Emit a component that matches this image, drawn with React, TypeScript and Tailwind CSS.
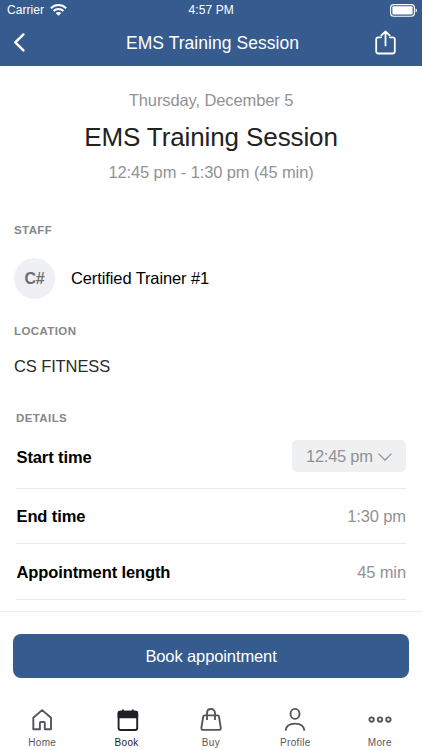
import type { ReactNode } from "react";

function StatusBar() {
  return (
    <div className="grid h-5 grid-cols-[1fr_45px_1fr] items-center text-[12px]">
      <div className="flex items-center gap-[6px] pl-[7px]">
        <span className="tracking-[0.05px]">Carrier</span>
        <svg width="17" height="12" viewBox="0 0 17 12" fill="none" stroke="currentColor" strokeWidth="2">
          <path d="M0.9 4.2C5.2 0 11.8 0 16.1 4.2" />
          <path d="M3.6 7C6.4 4.3 10.6 4.3 13.4 7" />
          <path d="M8.5 11.8L5.7 9C7.3 7.5 9.7 7.5 11.3 9Z" fill="currentColor" stroke="none" />
        </svg>
      </div>
      <span className="whitespace-nowrap tracking-[0.1px]">4:57 PM</span>
      <svg className="mr-[4px] justify-self-end" width="28" height="13" viewBox="0 0 28 13" fill="none">
        <rect x="0.6" y="0.6" width="23.8" height="11.6" rx="3" stroke="currentColor" strokeWidth="1.1" />
        <rect x="2.4" y="2.3" width="20.2" height="8.2" rx="1" fill="currentColor" />
        <path d="M25.6 4.4C27.5 5 27.5 7.8 25.6 8.4Z" fill="currentColor" />
      </svg>
    </div>
  );
}

function Header() {
  return (
    <header className="bg-[#365c8f] text-white">
      <StatusBar />
      <div className="flex h-[46px] items-center justify-between pl-[13px] pr-[25px]">
        <svg width="37" height="20" viewBox="0 0 37 20" fill="none" stroke="currentColor" strokeWidth="2.4" strokeLinecap="round" strokeLinejoin="round">
          <path d="M10.4 1.4L2.3 9.4L10.4 17.4" />
        </svg>
        <h1 className="text-[17.5px] tracking-[0.04px]">EMS Training Session</h1>
        <svg width="22" height="26" viewBox="0 0 22 26" fill="none" stroke="currentColor" strokeWidth="1.8" strokeLinecap="round" strokeLinejoin="round">
          <path d="M6.2 7.3H3.4C2 7.3 1.2 8.1 1.2 9.5V21.3C1.2 22.7 2 23.5 3.4 23.5H17.6C19 23.5 19.8 22.7 19.8 21.3V9.5C19.8 8.1 19 7.3 17.6 7.3H14.8" />
          <path d="M10.5 15.4V1.9M6.4 5.4L10.5 1.5L14.6 5.4" />
        </svg>
      </div>
    </header>
  );
}

function SectionLabel({ children }: { children: ReactNode }) {
  return <h3 className="text-[11.5px] leading-4 font-bold tracking-[0.4px] text-[#86878a]">{children}</h3>;
}

function DetailRow({ label, className = "h-[55.5px] pt-[2px]", children }: { label: string; className?: string; children: ReactNode }) {
  return (
    <div className={`flex items-center justify-between border-b border-[#ebebec] ${className}`}>
      <span className="pl-[0.5px] font-bold text-black">{label}</span>
      <span className="text-[#929294]">{children}</span>
    </div>
  );
}

const tabs = [
  {
    label: "Home",
    icon: (
      <path d="M2.3 9.8L11.1 2.1L20 9.8V21.3H13.8V14.9C13.8 14.3 13.5 14 12.9 14H9.8C9.2 14 8.9 14.3 8.9 14.9V21.3H2.3Z" />
    ),
  },
  {
    label: "Book",
    active: true,
    icon: (
      <>
        <rect x="2.6" y="3.8" width="18.6" height="18.2" rx="2" />
        <path d="M3.6 3.8H20.2Q21.2 3.8 21.2 4.8V9.2H2.6V4.8Q2.6 3.8 3.6 3.8Z" fill="currentColor" />
        <path d="M7 1.6V4M16.8 1.6V4" />
      </>
    ),
  },
  {
    label: "Buy",
    icon: (
      <>
        <path d="M4.6 7.4H17.6Q18.8 7.4 19 8.6L20.8 19.8Q21 21.9 18.9 21.9H3.3Q1.2 21.9 1.4 19.8L3.2 8.6Q3.4 7.4 4.6 7.4Z" />
        <path d="M7 12V5.2C7 2.5 8.6 1 11 1S15 2.5 15 5.2V12" />
      </>
    ),
  },
  {
    label: "Profile",
    icon: (
      <>
        <ellipse cx="11" cy="5.9" rx="4.5" ry="5" />
        <path d="M1.6 22.6C2 18 5.4 15.6 11 15.6S20 18 20.4 22.6" />
      </>
    ),
  },
  {
    label: "More",
    icon: (
      <>
        <circle cx="2.6" cy="11.6" r="2.2" />
        <circle cx="11" cy="11.6" r="2.2" />
        <circle cx="19.4" cy="11.6" r="2.2" />
      </>
    ),
  },
];

function TabBar() {
  return (
    <nav className="grid grid-cols-5 pt-[8px]">
      {tabs.map((tab) => (
        <div key={tab.label} className={`flex flex-col items-center ${tab.active ? "text-[#202127]" : "text-[#55565b]"}`}>
          <svg className="overflow-visible" width="22" height="22" viewBox="0 0 22 22" fill="none" stroke="currentColor" strokeWidth="1.9" strokeLinejoin="round">
            {tab.icon}
          </svg>
          <span className="mt-[5px] text-[10px] leading-4 tracking-[0.35px]">{tab.label}</span>
        </div>
      ))}
    </nav>
  );
}

export default function App() {
  return (
    <div className="flex h-[750px] w-[422px] flex-col overflow-hidden bg-white font-['Liberation_Sans',Arial,sans-serif] text-[16.5px] tracking-[-0.11px]">
      <Header />

      <main className="flex-1">
        <div className="pt-[23px] text-center text-[#929294]">
          <p className="leading-[22px]">Thursday, December 5</p>
          <h2 className="mt-[9px] text-[26px] leading-[34px] text-[#222]">EMS Training Session</h2>
          <p className="mt-[7px] leading-[22px]">12:45 pm - 1:30 pm (45 min)</p>
        </div>

        <section className="mt-[39px] px-[14px]">
          <SectionLabel>STAFF</SectionLabel>
          <div className="mt-[20px] flex items-center gap-[16px]">
            <div className="flex size-[41px] items-center justify-center rounded-full bg-[#eff0f3] text-[16px] font-bold text-[#6c6e73]">C#</div>
            <span className="text-black">Certified Trainer #1</span>
          </div>
        </section>

        <section className="mt-[24px] px-[14px]">
          <SectionLabel>LOCATION</SectionLabel>
          <p className="mt-[16px] leading-[22px] text-[#2b2b2b]">CS FITNESS</p>
        </section>

        <section className="mt-[33px] px-[16px]">
          <SectionLabel>DETAILS</SectionLabel>
          <div className="mt-[7px]">
            <DetailRow label="Start time" className="h-[55.5px] pb-[5px]">
              <button className="mt-[-3px] flex h-[32px] w-[114px] items-center gap-[5px] rounded-[5px] bg-[#eff0f2] pl-[14px] tracking-[-0.25px]">
                12:45 pm
                <svg className="mt-[2px]" width="14" height="8" viewBox="0 0 14 8" fill="none" stroke="currentColor" strokeWidth="1.3">
                  <path d="M0.6 0.6L7 7.2L13.4 0.6" />
                </svg>
              </button>
            </DetailRow>
            <DetailRow label="End time">1:30 pm</DetailRow>
            <DetailRow label="Appointment length">45 min</DetailRow>
          </div>
        </section>
      </main>

      <footer className="h-[139px] border-t border-[#ebebec] bg-white pt-[22px]">
        <div className="px-[13px] pb-[22px]">
          <button className="h-[44px] w-full rounded-[8px] bg-[#365c8f] pt-[1px] text-white">Book appointment</button>
        </div>
        <TabBar />
      </footer>
    </div>
  );
}
